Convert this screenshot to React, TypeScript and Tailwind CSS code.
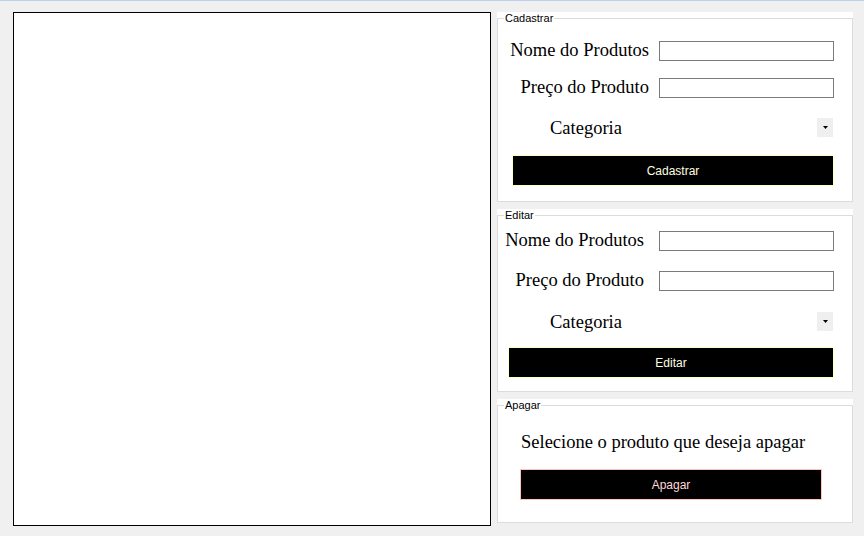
const sans = "font-['Liberation_Sans',Arial,sans-serif]";
const serif = "font-['Liberation_Serif','Times_New_Roman',serif]";

function GroupBox({ title, height, children }: { title: string; height: string; children: React.ReactNode }) {
  return (
    <div className={`bg-white pt-[6px] ${height} flex flex-col`}>
      <div className="relative flex-1 border border-[#dcdcdc] flex flex-col">
        {/* legend over the border */}
        <span className={`absolute top-[-7px] left-[6px] bg-white px-[1px] text-[11px] leading-[13px] text-black ${sans}`}>
          {title}
        </span>
        {children}
      </div>
    </div>
  );
}

function FieldRow({ label, className, gap }: { label: string; className: string; gap: string }) {
  return (
    <div className={`flex items-center justify-end pr-[18px] ${gap} ${className}`}>
      <span className={`text-[18.5px] leading-[20px] text-black -translate-y-[1px] ${serif}`}>{label}</span>
      <div className="h-[20px] w-[175px] border border-[#7a7a7a] bg-white" />
    </div>
  );
}

function CategoryRow({ className }: { className: string }) {
  return (
    <div className={`flex items-center justify-between pl-[52px] pr-[19px] h-[19px] ${className}`}>
      <span className={`text-[18.5px] leading-[20px] text-black ${serif}`}>Categoria</span>
      <div className="flex h-[19px] w-[16px] items-center justify-center bg-[#efefef]">
        <svg width="5" height="3" viewBox="0 0 5 3">
          <path d="M0 0H5L2.5 3Z" fill="#000" />
        </svg>
      </div>
    </div>
  );
}

export default function App() {
  return (
    <div className="h-[536px] w-[864px] overflow-hidden border-t border-[#b9d1ea] bg-[#f0f0f0]">
      <div className="flex pt-[11px] pl-[13px]">
        {/* list area */}
        <div className="h-[514px] w-[478px] border border-black bg-white" />

        <div className="ml-[6px] flex w-[356px] flex-col gap-[7px]">
          <GroupBox title="Cadastrar" height="h-[190px]">
            <FieldRow label="Nome do Produtos" gap="gap-[10px]" className="mt-[22px]" />
            <FieldRow label="Preço do Produto" gap="gap-[10px]" className="mt-[17px]" />
            <CategoryRow className="mt-[20px]" />
            <div className="mt-[18px] pl-[14px] pr-[18px]">
              <button className={`h-[31px] w-full border border-[#ffffc0] bg-black text-[12px] text-[#ffffe0] ${sans}`}>
                Cadastrar
              </button>
            </div>
          </GroupBox>

          <GroupBox title="Editar" height="h-[183px]">
            <FieldRow label="Nome do Produtos" gap="gap-[15px]" className="mt-[15px]" />
            <FieldRow label="Preço do Produto" gap="gap-[15px]" className="mt-[20px]" />
            <CategoryRow className="mt-[21px]" />
            <div className="mt-[16px] pl-[10px] pr-[18px]">
              <button className={`h-[31px] w-full border border-[#ffffc0] bg-black text-[12px] text-[#ffffe0] ${sans}`}>
                Editar
              </button>
            </div>
          </GroupBox>

          <GroupBox title="Apagar" height="h-[124px]">
            <p className={`mt-[26px] pl-[23px] text-[18.5px] leading-[20px] text-black ${serif}`}>
              Selecione o produto que deseja apagar
            </p>
            <div className="mt-[17px] pl-[22px]">
              <button className={`h-[31px] w-[302px] border border-[#ffc0c0] bg-black text-[12px] text-[#ffd8d8] ${sans}`}>
                Apagar
              </button>
            </div>
          </GroupBox>
        </div>
      </div>
    </div>
  );
}
